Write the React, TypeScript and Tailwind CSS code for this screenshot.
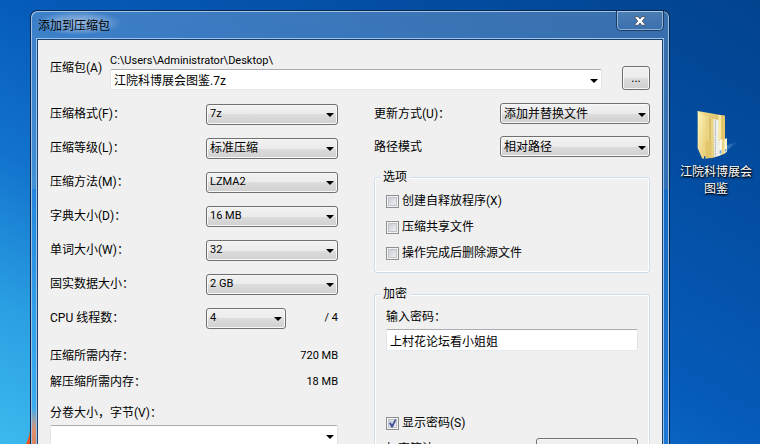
import { useState } from "react";
import type { ReactNode } from "react";

interface Field {
    id: string;
    label: string;
    value: string;
}

const COMPRESSION_FIELDS: Field[] = [
    { id: "format", label: "压缩格式(F)：", value: "7z" },
    { id: "level", label: "压缩等级(L)：", value: "标准压缩" },
    { id: "method", label: "压缩方法(M)：", value: "LZMA2" },
    { id: "dictionary", label: "字典大小(D)：", value: "16 MB" },
    { id: "word", label: "单词大小(W)：", value: "32" },
    { id: "solid", label: "固实数据大小：", value: "2 GB" },
];

const MODE_FIELDS: Field[] = [
    { id: "update", label: "更新方式(U)：", value: "添加并替换文件" },
    { id: "path", label: "路径模式", value: "相对路径" },
];

const MEMORY = [
    { label: "压缩所需内存：", value: "720 MB" },
    { label: "解压缩所需内存：", value: "18 MB" },
];

const OPTIONS = ["创建自释放程序(X)", "压缩共享文件", "操作完成后删除源文件"];

const TEXT_BOX = "block w-full min-w-0 rounded-[2px] border border-t-[#abadb3] border-x-[#e2e3ea] border-b-[#e3e9ef] bg-white px-[3px] outline-none";

function Arrow() {
    return (
        <svg viewBox="0 0 8 4" className="pointer-events-none absolute right-1 top-1/2 -mt-px h-1 w-2">
            <path d="M0 0h8L4 4z" fill="#000" />
        </svg>
    );
}

function Select({ id, value, width = "w-33" }: { id: string; value: string; width?: string }) {
    const latin = /^[\x20-\x7e]+$/.test(value);
    return (
        <div className={`relative shrink-0 ${width}`}>
            <select
                id={id}
                className={`block h-[21px] w-full appearance-none rounded-[3px] border border-[#707070] bg-[linear-gradient(#f2f2f2,#ebebeb_50%,#dddddd_50%,#cfcfcf)] px-[3px] shadow-[inset_0_0_0_1px_#f8f8f8] ${latin ? "text-[11px]" : "text-xs"}`}
            >
                <option>{value}</option>
            </select>
            <Arrow />
        </div>
    );
}

function Check({ label, defaultChecked = false }: { label: string; defaultChecked?: boolean }) {
    const [checked, setChecked] = useState(defaultChecked);
    return (
        <label className="flex h-[26px] items-center gap-[3px]">
            <span className="relative size-[13px] shrink-0">
                <input
                    type="checkbox"
                    checked={checked}
                    onChange={(e) => setChecked(e.target.checked)}
                    className="block size-[13px] appearance-none border border-[#8e8f8f] bg-linear-to-br from-[#c4c8d2] to-[#f6f6f6] shadow-[inset_0_0_0_1px_#f4f4f4,inset_0_0_0_2px_#c0c4ca]"
                />
                {checked && (
                    <svg viewBox="0 0 13 13" className="pointer-events-none absolute inset-0">
                        <path d="M3 6.2l1.7-1L6 7.6 8.8 2.5h1.7L6.8 10.4H5.5z" fill="#3f5299" />
                    </svg>
                )}
            </span>
            {label}
        </label>
    );
}

function Group({ title, className, children }: { title: string; className: string; children: ReactNode }) {
    return (
        <fieldset className={`min-w-0 rounded-[3px] border border-[#d0dde9] px-[11px] shadow-[inset_0_0_0_1px_#fff] ${className}`}>
            <legend className="-ml-1.5 bg-[#f0f0f0] px-[3px] leading-[18px]">{title}</legend>
            {children}
        </fieldset>
    );
}

function CloseButton() {
    return (
        <button
            aria-label="Close"
            className="flex h-5 w-12 items-center justify-center rounded-b-[5px] border border-t-0 border-[#1b3c66] bg-linear-to-b from-white/10 to-white/0 shadow-[inset_1px_0_0_#8fb2d8,inset_-1px_0_0_#8fb2d8,inset_0_-1px_0_#8fb2d8]"
        >
            <svg viewBox="0 0 12 10" className="h-2.5 w-3">
                <path
                    d="M1 .7h3.2L6 2.9 7.8.7H11v1L8.300 5 11 8.300v1H7.800L6 7.100 4.200 9.300H1v-1L3.700 5 1 1.700z"
                    fill="#fff"
                    stroke="#4a5263"
                    strokeWidth=".9"
                />
            </svg>
        </button>
    );
}

function FolderIcon() {
    return (
        <svg viewBox="0 0 180 180" className="size-15">
            <defs>
                <linearGradient id="cover" x1="0" y1="0" x2="1" y2="1">
                    <stop offset="0" stopColor="#fff6bd" />
                    <stop offset="1" stopColor="#e3c76c" />
                </linearGradient>
                <linearGradient id="inner" x1="0" x2="1">
                    <stop offset="0" stopColor="#f3e194" />
                    <stop offset="1" stopColor="#d9bb5f" />
                </linearGradient>
                <linearGradient id="shade" x1="0" x2="1">
                    <stop offset="0" stopColor="#9cc8ee" stopOpacity=".5" />
                    <stop offset="1" stopColor="#9cc8ee" stopOpacity="0" />
                </linearGradient>
            </defs>
            <path d="M110 125l48-17-44 36z" fill="url(#shade)" />
            <path d="M35 18l82 14v114l-40 14-24-8z" fill="url(#inner)" />
            <path d="M62 36l10 4v112l-10-4zM73 40l8 2v110l-8 2z" fill="#ead583" />
            <path d="M72 40v110" stroke="#b8974a" strokeWidth="2" />
            <path d="M82 42l18 4v106l-16 5z" fill="#eef0ee" />
            <path d="M88 46v108" stroke="#a9aeb0" strokeWidth="3" strokeDasharray="5 2" />
            <path d="M97 30l8 1v75l-8-4z" fill="#f7e9a6" />
            <path d="M105 31l12 1v72l-12 2z" fill="#e4c76b" />
            <path d="M58 108h19v50l-19 3z" fill="#e2c66e" />
            <path d="M35 18l27 20v70l-5 4-3 50-6-2-13-30z" fill="url(#cover)" />
            <path d="M100 108l8-6v44l-8 7z" fill="#fff" />
            <path d="M107 104h9v40l-9 3z" fill="#efd785" />
            <path d="M115 102l8-2v41l-8 4z" fill="#fdf6cf" />
            <path d="M117 132h4v8h-4zM101 136h5v10h-5z" fill="#6fa8e6" />
        </svg>
    );
}

function Flame() {
    return (
        <svg viewBox="0 0 38 50" className="pointer-events-none absolute bottom-0 left-0 h-[50px] w-[38px]">
            <defs>
                <linearGradient id="glow" x1="0" y1="0" x2="0" y2="1">
                    <stop offset="0" stopColor="#e8a080" stopOpacity="0" />
                    <stop offset=".6" stopColor="#e09070" />
                    <stop offset="1" stopColor="#dc8262" />
                </linearGradient>
            </defs>
            <path d="M30 35c0 6-2 10-4 15h4z" fill="#e8541c" />
            <path d="M32 14h4v36h-4z" fill="url(#glow)" />
        </svg>
    );
}

export default function App() {
    const [archive, setArchive] = useState("江院科博展会图鉴.7z");
    const [password, setPassword] = useState("上村花论坛看小姐姐");
    const [volume, setVolume] = useState("");

    return (
        <div className="relative flex h-screen items-stretch overflow-hidden bg-[linear-gradient(to_top_right,#3cbaee,#2a9fe2_16%,#1273cd_33%,#065cba_50%,#034ea3_75%,#02438e)] pl-[30px] pt-2.5 font-['Roboto','Noto_Sans_CJK_SC',sans-serif] text-xs text-black">
            <main className="flex min-w-0 flex-1 flex-col rounded-t-[7px] border border-b-0 border-[#0b2648] bg-[linear-gradient(#ffffff38,#ffffff30_178px,#46a4ff50_178px)] px-[5px] shadow-[inset_1px_1px_0_#9cc4ea,inset_-1px_0_0_#9cc4ea]">
                <header className="flex h-[27px] shrink-0 items-start justify-between">
                    <h1 className="bg-[radial-gradient(closest-side,#ffffff70,#ffffff40_60%,#ffffff00)] pt-1.5 pr-3 pl-0.5 leading-[18px]">添加到压缩包</h1>
                    <CloseButton />
                </header>
                <div className="flex-1 border border-b-0 border-[#9cc4ea]">
                    <div className="h-full border border-b-0 border-[#1c3f6b] bg-[#f0f0f0] px-3 pt-3">
                        <div className="flex items-end">
                            <label htmlFor="archive" className="w-15 shrink-0 self-start pt-2">压缩包(A)</label>
                            <div className="min-w-0 flex-1">
                                <p className="text-[11px] leading-[17px]">C:\Users\Administrator\Desktop\</p>
                                <div className="relative">
                                    <input
                                        id="archive"
                                        value={archive}
                                        onChange={(e) => setArchive(e.target.value)}
                                        className={`h-[21px] ${TEXT_BOX}`}
                                    />
                                    <Arrow />
                                </div>
                            </div>
                            <button className="ml-5 h-6 w-7 rounded-[3px] border border-[#707070] bg-[linear-gradient(#f2f2f2,#ebebeb_50%,#dddddd_50%,#cfcfcf)] shadow-[inset_0_0_0_1px_#f8f8f8]">
                                ...
                            </button>
                        </div>

                        <div className="mt-[7px] grid grid-cols-[288fr_276fr] gap-9">
                            <section>
                                {COMPRESSION_FIELDS.map((f) => (
                                    <div key={f.id} className="flex h-[34px] items-center justify-between">
                                        <label htmlFor={f.id}>{f.label}</label>
                                        <Select id={f.id} value={f.value} />
                                    </div>
                                ))}
                                <div className="flex h-[34px] items-center justify-between">
                                    <label htmlFor="threads">CPU 线程数：</label>
                                    <div className="flex w-33 items-center justify-between">
                                        <Select id="threads" value="4" width="w-20" />
                                        <span className="text-[11px]">/ 4</span>
                                    </div>
                                </div>
                                <div className="mt-2">
                                    {MEMORY.map((m) => (
                                        <div key={m.label} className="flex h-[26px] items-center justify-between">
                                            <span>{m.label}</span>
                                            <span className="text-[11px]">{m.value}</span>
                                        </div>
                                    ))}
                                </div>
                                <label htmlFor="volume" className="mt-2 mb-0.5 block leading-5">分卷大小，字节(V)：</label>
                                <div className="relative">
                                    <input
                                        id="volume"
                                        value={volume}
                                        onChange={(e) => setVolume(e.target.value)}
                                        className={`h-[21px] ${TEXT_BOX}`}
                                    />
                                    <Arrow />
                                </div>
                            </section>

                            <section>
                                {MODE_FIELDS.map((f) => (
                                    <div key={f.id} className="flex h-[33px] items-center justify-between">
                                        <label htmlFor={f.id}>{f.label}</label>
                                        <Select id={f.id} value={f.value} width="w-[150px]" />
                                    </div>
                                ))}

                                <Group title="选项" className="mt-[5px] pt-0.5 pb-1.5">
                                    {OPTIONS.map((o) => (
                                        <Check key={o} label={o} />
                                    ))}
                                </Group>

                                <Group title="加密" className="mt-3 pt-1 pb-3">
                                    <label htmlFor="password" className="mb-0.5 block leading-5">输入密码：</label>
                                    <input
                                        id="password"
                                        value={password}
                                        onChange={(e) => setPassword(e.target.value)}
                                        className={`mb-[59px] h-[22px] ${TEXT_BOX}`}
                                    />
                                    <Check label="显示密码(S)" defaultChecked />
                                    <div className="mt-0.5 flex items-center justify-between">
                                        <label htmlFor="cipher">加密算法：</label>
                                        <Select id="cipher" value="" width="w-[102px]" />
                                    </div>
                                </Group>
                            </section>
                        </div>
                    </div>
                </div>
            </main>

            <aside className="flex w-[90px] shrink-0 flex-col items-center pt-[95px] pl-0.5 text-center leading-[17px] text-white">
                <FolderIcon />
                <span className="-mt-px w-19 [text-shadow:1px_1px_2px_#000,0_1px_2px_#000]">江院科博展会图鉴</span>
            </aside>
            <Flame />
        </div>
    );
}
